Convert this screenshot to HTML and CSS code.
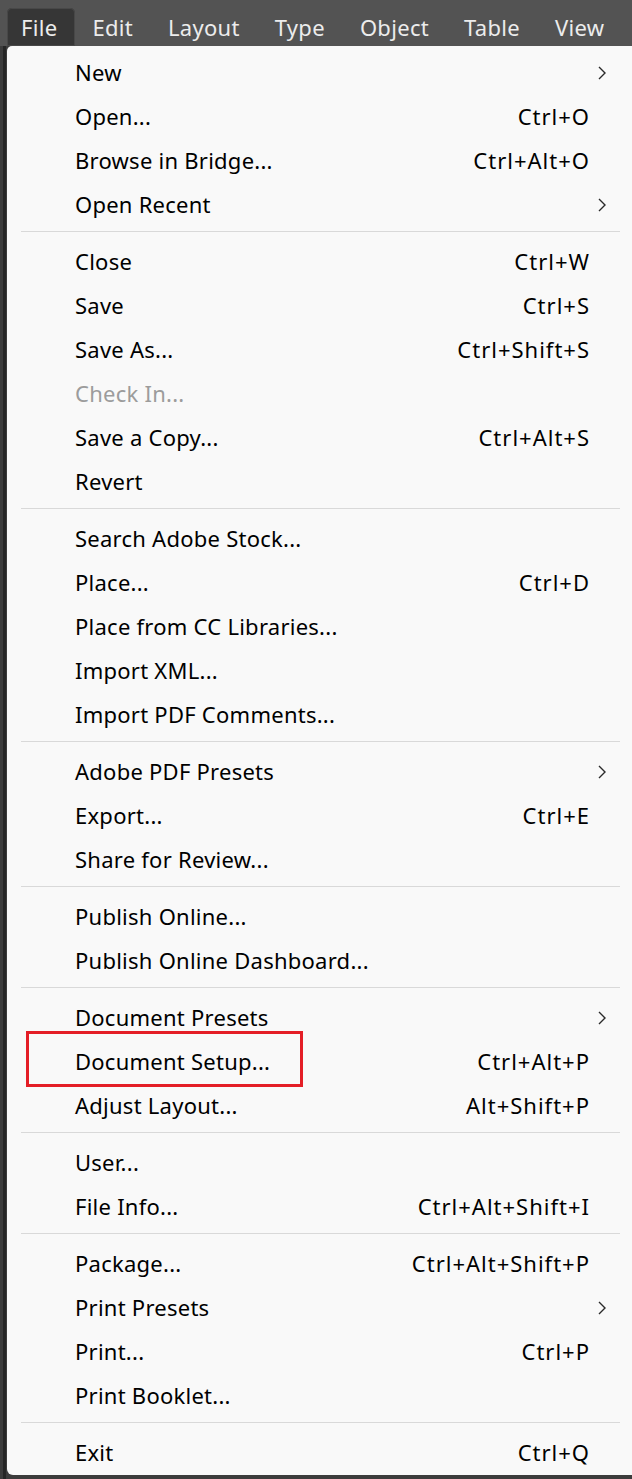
FILE: index.html
```html
<!DOCTYPE html>
<html>
<head>
<meta charset="utf-8">
<link rel="stylesheet" href="styles.css">
</head>
<body>
<div class="menubar">
  <span class="mb-item active">File</span>
  <span class="mb-item">Edit</span>
  <span class="mb-item">Layout</span>
  <span class="mb-item">Type</span>
  <span class="mb-item">Object</span>
  <span class="mb-item">Table</span>
  <span class="mb-item">View</span>
</div>
<div class="workspace">
  <div class="menu">
    <div class="row"><span class="label">New</span><span class="key"></span><svg class="arrow" viewBox="0 0 8 14"><path d="M1 1 L7 7 L1 13"/></svg></div>
    <div class="row"><span class="label">Open...</span><span class="key">Ctrl+O</span></div>
    <div class="row"><span class="label">Browse in Bridge...</span><span class="key">Ctrl+Alt+O</span></div>
    <div class="row"><span class="label">Open Recent</span><span class="key"></span><svg class="arrow" viewBox="0 0 8 14"><path d="M1 1 L7 7 L1 13"/></svg></div>
    <div class="sep"></div>
    <div class="row"><span class="label">Close</span><span class="key">Ctrl+W</span></div>
    <div class="row"><span class="label">Save</span><span class="key">Ctrl+S</span></div>
    <div class="row"><span class="label">Save As...</span><span class="key">Ctrl+Shift+S</span></div>
    <div class="row disabled"><span class="label">Check In...</span><span class="key"></span></div>
    <div class="row"><span class="label">Save a Copy...</span><span class="key">Ctrl+Alt+S</span></div>
    <div class="row"><span class="label">Revert</span><span class="key"></span></div>
    <div class="sep"></div>
    <div class="row"><span class="label">Search Adobe Stock...</span><span class="key"></span></div>
    <div class="row"><span class="label">Place...</span><span class="key">Ctrl+D</span></div>
    <div class="row"><span class="label">Place from CC Libraries...</span><span class="key"></span></div>
    <div class="row"><span class="label">Import XML...</span><span class="key"></span></div>
    <div class="row"><span class="label">Import PDF Comments...</span><span class="key"></span></div>
    <div class="sep"></div>
    <div class="row"><span class="label">Adobe PDF Presets</span><span class="key"></span><svg class="arrow" viewBox="0 0 8 14"><path d="M1 1 L7 7 L1 13"/></svg></div>
    <div class="row"><span class="label">Export...</span><span class="key">Ctrl+E</span></div>
    <div class="row"><span class="label">Share for Review...</span><span class="key"></span></div>
    <div class="sep"></div>
    <div class="row"><span class="label">Publish Online...</span><span class="key"></span></div>
    <div class="row"><span class="label">Publish Online Dashboard...</span><span class="key"></span></div>
    <div class="sep"></div>
    <div class="row"><span class="label">Document Presets</span><span class="key"></span><svg class="arrow" viewBox="0 0 8 14"><path d="M1 1 L7 7 L1 13"/></svg></div>
    <div class="row highlighted"><span class="label">Document Setup...</span><span class="key">Ctrl+Alt+P</span><span class="callout"></span></div>
    <div class="row"><span class="label">Adjust Layout...</span><span class="key">Alt+Shift+P</span></div>
    <div class="sep"></div>
    <div class="row"><span class="label">User...</span><span class="key"></span></div>
    <div class="row"><span class="label">File Info...</span><span class="key">Ctrl+Alt+Shift+I</span></div>
    <div class="sep"></div>
    <div class="row"><span class="label">Package...</span><span class="key">Ctrl+Alt+Shift+P</span></div>
    <div class="row"><span class="label">Print Presets</span><span class="key"></span><svg class="arrow" viewBox="0 0 8 14"><path d="M1 1 L7 7 L1 13"/></svg></div>
    <div class="row"><span class="label">Print...</span><span class="key">Ctrl+P</span></div>
    <div class="row"><span class="label">Print Booklet...</span><span class="key"></span></div>
    <div class="sep"></div>
    <div class="row"><span class="label">Exit</span><span class="key">Ctrl+Q</span></div>
  </div>
</div>
</body>
</html>
```

FILE: styles.css
```css
html, body {
  margin: 0;
  padding: 0;
}
body {
  background: #363636;
  font-family: "Noto Sans", "Open Sans", sans-serif;
  width: 632px;
  overflow: hidden;
}
.menubar {
  height: 46px;
  background: #535353;
  display: flex;
  align-items: flex-end;
  padding-left: 7px;
  box-sizing: border-box;
}
.mb-item {
  height: 38px;
  box-sizing: border-box;
  padding: 0 18px 0 17px;
  display: flex;
  align-items: center;
  color: #ececec;
  font-size: 22px;
  letter-spacing: 0.3px;
  white-space: nowrap;
  border-radius: 5px 5px 0 0;
}
.mb-item.active {
  padding-left: 14px;
  background: #363636;
  box-shadow: inset 0 0 0 1px #484848;
}
.workspace {
  display: flex;
  padding-left: 7px;
  background: linear-gradient(to right, #3c3c3c 0 3px, #262626 3px 6px, #3c3c3c 6px);
  height: 1433px;
}
.menu {
  width: 640px;
  flex: none;
  background: #f9f9f9;
  border-radius: 5px 8px 6px 6px;
  padding: 5px 0 1px;
  height: 1429px;
  box-sizing: border-box;
}
.row {
  position: relative;
  height: 44px;
  box-sizing: border-box;
  padding-bottom: 2px;
  display: flex;
  align-items: center;
  padding-left: 68px;
  font-size: 22px;
  color: #000;
  white-space: nowrap;
}
.row .label {
  flex: 1;
  min-width: 0;
  letter-spacing: 0.25px;
}
.row .key {
  width: 260px;
  text-align: right;
  margin-right: 57px;
  letter-spacing: 1px;
}
.row.disabled {
  color: #9c9c9c;
}
.arrow {
  position: absolute;
  left: 591px;
  top: 15px;
  width: 8px;
  height: 14px;
  fill: none;
  stroke: #2a2a2a;
  stroke-width: 1.4;
}
.sep {
  height: 1px;
  background: #d9d9d9;
  margin: 4px 0 8px;
  margin-left: 14px;
  width: 599px;
}
.callout {
  position: absolute;
  left: 19px;
  top: -9px;
  width: 277px;
  height: 56px;
  box-sizing: border-box;
  border: 3px solid #e41e26;
}
```
